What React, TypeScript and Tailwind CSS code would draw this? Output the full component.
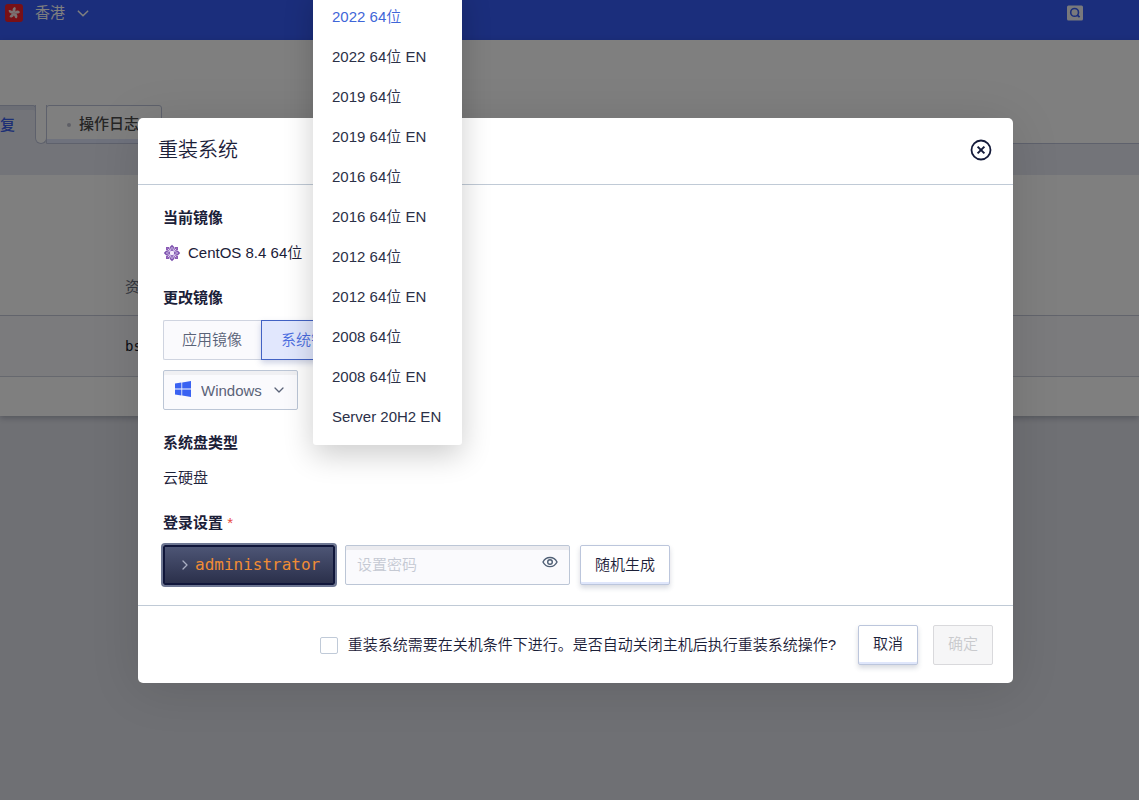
import { useState } from 'react';

const versions = [
  '2022 64位',
  '2022 64位 EN',
  '2019 64位',
  '2019 64位 EN',
  '2016 64位',
  '2016 64位 EN',
  '2012 64位',
  '2012 64位 EN',
  '2008 64位',
  '2008 64位 EN',
  'Server 20H2 EN',
];

const petals = [0, 72, 144, 216, 288];

function HongKongFlag() {
  return (
    <svg viewBox="0 0 18 18" className="w-[18px] h-[18px]" aria-hidden="true">
      <rect width="18" height="18" rx="3" fill="#f0202c" />
      {petals.map((angle) => (
        <path
          key={angle}
          transform={`rotate(${angle + 8} 9 9)`}
          d="M9 9C6.6 7.6 6.4 4.4 9 3C11 4.2 9.6 5.6 10.2 6.6C10.2 7.4 9.6 8.2 9 9Z"
          fill="#f6e4e4"
        />
      ))}
    </svg>
  );
}

function CentosIcon() {
  return (
    <svg viewBox="0 0 18 18" className="w-[18px] h-[18px]" aria-hidden="true">
      {[0, 90, 180, 270].map((angle) => (
        <g key={angle} transform={`rotate(${angle} 9 9)`}>
          <path d="M9 .8L11.2 3L10.4 5.6L9 9L7.6 5.6L6.8 3Z" fill="#7d52ae" />
          <path d="M11.8 3H15V6.2L12.6 7L11 5.4Z" fill="#8a5ab5" />
          <path d="M9 3V5.6M13.2 4.8L11.6 6.4" stroke="#ddd0f0" strokeWidth="1" fill="none" />
          <path d="M10.4 5.6L12.4 7.6L9 9Z" fill="#b79bdc" />
        </g>
      ))}
      <circle cx="9" cy="9" r="2.2" fill="#f3ebfb" />
    </svg>
  );
}

function WindowsIcon() {
  return (
    <svg viewBox="0 0 16 16" className="w-4 h-4" fill="#3a62f2" aria-hidden="true">
      <path d="M0 2.6L6.4 1.6V7.6H0ZM7.2 1.4L16 0V7.6H7.2ZM0 8.4H6.4V14.4L0 13.4ZM7.2 8.4H16V16L7.2 14.6Z" />
    </svg>
  );
}

function Chevron({ className }: { className: string }) {
  return (
    <svg viewBox="0 0 10 6" className={className} fill="none" stroke="currentColor" aria-hidden="true">
      <path d="M1 1L5 5L9 1" strokeWidth="1.3" strokeLinecap="round" strokeLinejoin="round" />
    </svg>
  );
}

function ConsolePage() {
  return (
    <div className="min-h-screen bg-[#dfe1e9]">
      <header className="flex h-10 items-start justify-between bg-[#375cf8] pl-[5px] pr-14 text-white">
        <button type="button" className="flex items-center pt-1 text-[15px] font-normal leading-[18px]">
          <HongKongFlag />
          <span className="ml-3">香港</span>
          <Chevron className="ml-3 h-[7px] w-3" />
        </button>
        <button type="button" aria-label="搜索" className="pt-[5px]">
          <svg viewBox="0 0 16 16" className="h-4 w-4" aria-hidden="true">
            <rect y=".5" width="16" height="15" rx="1.5" fill="#f2f3f8" />
            <circle cx="7.6" cy="7.4" r="3.9" fill="none" stroke="#375cf8" strokeWidth="1.6" />
            <path d="M10.2 10L12.6 12.2" stroke="#375cf8" strokeWidth="1.8" />
          </svg>
        </button>
      </header>

      <main className="bg-white shadow-[0_2px_6px_rgba(40,45,70,0.3)]">
        <nav className="flex pt-[65px]">
          <a
            href="#restore"
            className="flex h-[39px] w-9 items-center rounded-tr-[3px] border-r border-t border-[#bcc2d8] bg-[#e6e9f3] text-[15px] font-medium text-[#3a5eea] shadow-[inset_0_4px_0_#d8dceb]"
          >
            复
          </a>
          <span className="-ml-px flex h-[39px] w-3 bg-[#e6e9f3]">
            <span className="flex-1 rounded-b-md border-x border-b border-[#bcc2d8] bg-white" />
          </span>
          <a
            href="#logs"
            className="-ml-px flex h-[39px] w-[116px] items-center rounded-t-[3px] border border-[#bcc2d8] pl-5 text-[15px] font-medium text-[#4c4c4c] shadow-[inset_0_-4px_0_#dfe5fb]"
          >
            <span className="mr-2 h-1 w-1 rounded-full bg-[#bcbfcd]" />
            操作日志
          </a>
          <span className="flex-1 border-b border-[#bcc2d8]" />
        </nav>
        <div className="h-[31px] bg-[#e6e9f3]" />
        <table className="w-full text-left text-[15px]">
          <thead>
            <tr className="h-[140px] border-b border-[#c4c8d8]">
              <th className="pb-4 pl-[125px] align-bottom font-normal text-[#6b7080]">资源</th>
            </tr>
          </thead>
          <tbody>
            <tr className="h-[61px] border-b border-[#ccd0dd] bg-[#f6f6fa]">
              <td className="pl-[125px] font-['DejaVu_Sans_Mono',monospace] text-sm text-[#15192b]">bs</td>
            </tr>
          </tbody>
        </table>
        <div className="h-[39px]" />
      </main>
    </div>
  );
}

function VersionMenu() {
  const [selected, setSelected] = useState(versions[0]);

  return (
    <ul className="absolute -bottom-[35px] left-0 w-[149px] rounded-[3px] bg-white pb-[9px] pt-2 shadow-[0_10px_30px_rgba(0,0,0,0.2)]">
      {versions.map((version) => (
        <li key={version}>
          <button
            type="button"
            onClick={() => setSelected(version)}
            className={`block h-10 w-full whitespace-nowrap pl-[19px] text-left ${
              version === selected ? 'text-[#3f66d8]' : 'text-[#2b3047]'
            }`}
          >
            {version}
          </button>
        </li>
      ))}
    </ul>
  );
}

export default function App() {
  const [os, setOs] = useState('Windows');
  const [shutdown, setShutdown] = useState(false);

  return (
    <div className="relative min-h-screen overflow-hidden font-['Liberation_Sans','Noto_Sans_CJK_SC',sans-serif] text-[15px] font-[350] text-[#1b2038]">
      <ConsolePage />

      {/* Overlay */}
      <div className="absolute inset-0 flex items-center justify-center bg-black/50 pl-3 pt-px">
        <section
          role="dialog"
          aria-labelledby="dialog-title"
          className="w-full max-w-[875px] rounded-[5px] bg-white shadow-[0_5px_50px_rgba(0,0,0,0.12)]"
        >
          <div className="flex h-[67px] items-center justify-between border-b border-[#c0cad6] px-5 pb-[2px]">
            <h2 id="dialog-title" className="text-xl font-[350]">重装系统</h2>
            <button type="button" aria-label="关闭">
              <svg viewBox="0 0 24 24" className="h-6 w-6" fill="none" stroke="#141a3a" aria-hidden="true">
                <circle cx="12" cy="12" r="9.5" strokeWidth="1.8" />
                <path d="M8.6 8.6L15.4 15.4M15.4 8.6L8.6 15.4" strokeWidth="2" />
              </svg>
            </button>
          </div>

          <div className="flex flex-col gap-5 px-[25px] py-5 leading-[25px]">
            <div className="flex flex-col gap-[10px]">
              <h3 className="font-bold">当前镜像</h3>
              <p className="flex items-center gap-[7px]">
                <CentosIcon />
                CentOS 8.4 64位
              </p>
            </div>

            <div className="flex flex-col gap-[10px]">
              <h3 className="font-bold">更改镜像</h3>
              <div className="flex">
                <button
                  type="button"
                  className="h-10 rounded-l-[2px] border border-r-0 border-[#cfd4e0] bg-[#fafafd] pl-[18px] pr-[19px] pb-px text-[#5a6378]"
                >
                  应用镜像
                </button>
                <button
                  type="button"
                  className="h-10 border border-[#4262c4] bg-[#e1e7fd] px-[19px] pb-px text-[#4a6ce0] shadow-[0_3px_6px_rgba(60,80,150,0.25)]"
                >
                  系统镜像
                </button>
              </div>
              <div className="flex gap-[15px]">
                <div className="relative flex h-10 w-[135px]">
                  <select
                    aria-label="操作系统"
                    value={os}
                    onChange={(e) => setOs(e.target.value)}
                    className="w-full appearance-none rounded-[2px] border border-[#bcc6d6] bg-[#fafafd] pl-[37px] text-[#5a6378] shadow-[inset_0_4px_0_#f0f0f3]"
                  >
                    <option>Windows</option>
                    <option>CentOS</option>
                  </select>
                  <span className="pointer-events-none absolute left-3 top-[11px]">
                    <WindowsIcon />
                  </span>
                  <Chevron className="pointer-events-none absolute right-[14px] top-[17px] h-[6px] w-[10px] text-[#5a6378]" />
                </div>
                <div className="relative">
                  <VersionMenu />
                </div>
              </div>
            </div>

            <div className="flex flex-col gap-[10px]">
              <h3 className="font-bold">系统盘类型</h3>
              <p>云硬盘</p>
            </div>

            <div className="flex flex-col gap-[10px]">
              <label htmlFor="password" className="font-bold">
                登录设置 <span className="font-normal text-[#e8493f]">*</span>
              </label>
              <div className="flex gap-[10px]">
                <div className="flex h-10 w-[172px] items-center rounded-[2px] border-2 border-[#10163a] bg-linear-to-b from-[#4d5575] to-[#2b304b] pl-[15px] font-['DejaVu_Sans_Mono',monospace] text-base text-[#f08c35] ring-2 ring-[#6d7692]">
                  <Chevron className="mr-[5px] h-[6px] w-[10px] -rotate-90 text-[#a9aec2]" />
                  administrator
                </div>
                <div className="relative">
                  <input
                    id="password"
                    type="password"
                    placeholder="设置密码"
                    className="h-10 w-[225px] rounded-[2px] border border-[#bcc6d6] bg-[#fafafd] pb-px pl-[11px] pr-9 shadow-[inset_0_4px_0_#ebebef] placeholder:text-[#c5c9d3]"
                  />
                  <button type="button" aria-label="显示密码" className="absolute right-3 top-[10px]">
                    <svg viewBox="0 0 16 14" className="h-[14px] w-4" fill="none" stroke="#4f5f75" strokeWidth="1.4" aria-hidden="true">
                      <path d="M1 7C4 .9 12 .9 15 7C12 13.1 4 13.1 1 7Z" />
                      <circle cx="8" cy="7" r="2.3" />
                    </svg>
                  </button>
                </div>
                <button
                  type="button"
                  className="h-10 w-[90px] rounded-[2px] border border-[#bcc6dc] bg-white pb-px shadow-[inset_0_-2px_0_#dfe6fb,0_3px_5px_rgba(60,70,100,0.2)]"
                >
                  随机生成
                </button>
              </div>
            </div>
          </div>

          <div className="flex items-center justify-end gap-[15px] border-t border-[#c0cad6] px-5 pb-[18px] pt-[19px]">
            <label className="mr-[7px] flex items-center gap-[10px]">
              <input
                type="checkbox"
                checked={shutdown}
                onChange={(e) => setShutdown(e.target.checked)}
                className="h-[17px] w-[18px] appearance-none rounded-[2px] border border-[#c0cad8] bg-white checked:bg-[#375cf8]"
              />
              重装系统需要在关机条件下进行。是否自动关闭主机后执行重装系统操作?
            </label>
            <button
              type="button"
              className="h-10 w-[60px] rounded-[2px] border border-[#bcc6dc] bg-white pb-px shadow-[inset_0_-2px_0_#dfe6fb,0_3px_5px_rgba(60,70,100,0.2)]"
            >
              取消
            </button>
            <button
              type="button"
              disabled
              className="h-10 w-[60px] rounded-[2px] border border-[#d9d9dc] bg-[#f6f6f7] pb-px text-[#c9cacd]"
            >
              确定
            </button>
          </div>
        </section>
      </div>
    </div>
  );
}
